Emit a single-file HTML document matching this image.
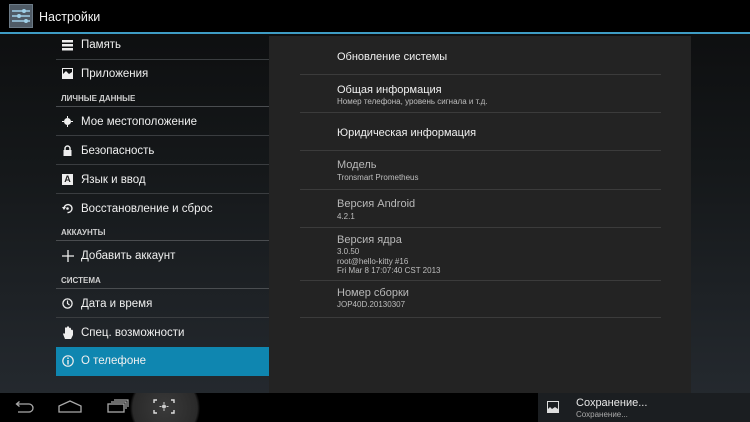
<!DOCTYPE html>
<html><head><meta charset="utf-8"><style>
*{margin:0;padding:0;box-sizing:border-box}
html,body{width:750px;height:422px;overflow:hidden}
body{position:relative;font-family:"Liberation Sans","DejaVu Sans",sans-serif;background:linear-gradient(#0c0d0e 0%,#15181a 40%,#262b31 100%);color:#eee}
.a{position:absolute}
.t{position:absolute;left:81px;font-size:11.5px;color:#f0f0f0;white-space:nowrap}
.h{position:absolute;left:61px;font-size:8px;font-weight:bold;color:#cfcfcf}
.ld{position:absolute;left:56px;width:213px;height:1px;background:#3a3d40}
.ic{position:absolute;left:62px;width:11px;height:11px}
.rt{position:absolute;left:337px;font-size:11px;color:#f0f0f0;white-space:nowrap}
.rg{color:#b8b8b8}
.rs{position:absolute;left:337px;font-size:8px;color:#bdbdbd;white-space:nowrap;line-height:12px}
.rd{position:absolute;left:300px;width:361px;height:1px;background:#3b3b3b}
</style></head><body>
<div class="a" style="left:0;top:0;width:750px;height:32px;background:#000"></div>
<div class="a" style="left:0;top:32px;width:750px;height:2px;background:#3e9cc4"></div>
<div class="a" style="left:9px;top:4px;width:24px;height:24px;background:#4f5b66;border:1px solid #6b7a86"></div>
<svg class="a" style="left:12px;top:8px" width="18" height="16"><g stroke="#9fd0e8" stroke-width="1.5"><line x1="0" y1="3" x2="18" y2="3"/><line x1="0" y1="8" x2="18" y2="8"/><line x1="0" y1="13" x2="18" y2="13"/></g><circle cx="12" cy="3" r="2" fill="#9fd0e8"/><circle cx="7" cy="8" r="2" fill="#9fd0e8"/><circle cx="14" cy="13" r="2" fill="#9fd0e8"/></svg>
<div class="a" style="left:39px;top:10px;font-size:12.5px;color:#f2f2f2">Настройки</div>

<div class="a" style="left:269px;top:36px;width:422px;height:357px;background:#232323"></div>

<svg class="ic" style="top:40px" viewBox="0 0 11 11"><g fill="#eee"><rect x="0" y="0" width="11" height="2.5"/><rect x="0" y="4" width="11" height="2.5"/><rect x="0" y="8" width="11" height="2.5"/></g></svg>
<div class="t" style="top:39px">Память</div>
<div class="ld" style="top:59px"></div>
<svg class="ic" style="top:68px" viewBox="0 0 11 11"><rect x="0.5" y="0.5" width="10" height="10" fill="none" stroke="#eee"/><path d="M1 10 L1 6 L4 3 L7 6 L10 4 L10 10Z" fill="#eee"/></svg>
<div class="t" style="top:68px">Приложения</div>
<div class="h" style="top:94px">ЛИЧНЫЕ ДАННЫЕ</div>
<div class="ld" style="top:106px;background:#4a4d50"></div>
<svg class="ic" style="top:116px" viewBox="0 0 11 11"><circle cx="5.5" cy="5.5" r="3.5" fill="#eee"/><path d="M5.5 0V2M5.5 9V11M0 5.5H2M9 5.5H11" stroke="#eee"/></svg>
<div class="t" style="top:116px">Мое местоположение</div>
<div class="ld" style="top:135px"></div>
<svg class="ic" style="top:145px" viewBox="0 0 11 11"><rect x="1.5" y="5" width="8" height="6" fill="#eee"/><path d="M3 5V3.5a2.5 2.5 0 0 1 5 0V5" stroke="#eee" stroke-width="1.5" fill="none"/></svg>
<div class="t" style="top:145px">Безопасность</div>
<div class="ld" style="top:164px"></div>
<div class="ic" style="top:174px;background:#eee;color:#222;font-size:9px;font-weight:bold;text-align:center;line-height:11px">A</div>
<div class="t" style="top:174px">Язык и ввод</div>
<div class="ld" style="top:193px"></div>
<svg class="ic" style="top:203px" viewBox="0 0 11 11"><path d="M2 5.5A4 4 0 1 1 5.5 9.5" stroke="#eee" stroke-width="1.4" fill="none"/><path d="M0 4L2 7L4 4Z" fill="#eee"/><circle cx="5.5" cy="5.5" r="1.3" fill="#eee"/></svg>
<div class="t" style="top:203px">Восстановление и сброс</div>
<div class="h" style="top:228px">АККАУНТЫ</div>
<div class="ld" style="top:240px;background:#4a4d50"></div>
<svg class="ic" style="top:250px;width:12px;height:12px" viewBox="0 0 12 12"><path d="M6 0V12M0 6H12" stroke="#eee" stroke-width="1.3"/></svg>
<div class="t" style="top:250px">Добавить аккаунт</div>
<div class="h" style="top:276px">СИСТЕМА</div>
<div class="ld" style="top:288px;background:#4a4d50"></div>
<svg class="ic" style="top:298px" viewBox="0 0 11 11"><circle cx="5.5" cy="5.5" r="4.6" stroke="#eee" stroke-width="1.3" fill="none"/><path d="M5.5 2.5V5.5L7.5 7" stroke="#eee" stroke-width="1.2" fill="none"/></svg>
<div class="t" style="top:298px">Дата и время</div>
<div class="ld" style="top:317px"></div>
<svg class="ic" style="top:326px;height:13px" viewBox="0 0 11 13"><path d="M3 13L1 8L2 7L3 8V2L4 1L5 2V1L6 0L7 1V2L8 1.5L9 2.5V4L10 3.5L11 4.5V9L9 13Z" fill="#eee"/></svg>
<div class="t" style="top:327px">Спец. возможности</div>
<div class="a" style="left:56px;top:347px;width:213px;height:29px;background:#0f86b0"></div>
<svg class="ic" style="top:355px;width:12px;height:12px" viewBox="0 0 12 12"><circle cx="6" cy="6" r="5.2" stroke="#eee" stroke-width="1.2" fill="none"/><path d="M6 5V9.5M6 2.5V4" stroke="#eee" stroke-width="1.4"/></svg>
<div class="t" style="top:355px">О телефоне</div>

<div class="rt" style="top:51px">Обновление системы</div>
<div class="rd" style="top:74px"></div>
<div class="rt" style="top:84px">Общая информация</div>
<div class="rs" style="top:96px">Номер телефона, уровень сигнала и т.д.</div>
<div class="rd" style="top:112px"></div>
<div class="rt" style="top:127px">Юридическая информация</div>
<div class="rd" style="top:150px"></div>
<div class="rt rg" style="top:159px">Модель</div>
<div class="rs" style="top:172px">Tronsmart Prometheus</div>
<div class="rd" style="top:189px"></div>
<div class="rt rg" style="top:198px">Версия Android</div>
<div class="rs" style="top:211px">4.2.1</div>
<div class="rd" style="top:227px"></div>
<div class="rt rg" style="top:234px">Версия ядра</div>
<div class="rs" style="top:247px;line-height:9.5px">3.0.50<br>root@hello-kitty #16<br>Fri Mar 8 17:07:40 CST 2013</div>
<div class="rd" style="top:280px"></div>
<div class="rt rg" style="top:287px">Номер сборки</div>
<div class="rs" style="top:299px">JOP40D.20130307</div>
<div class="rd" style="top:317px"></div>

<div class="a" style="left:0;top:393px;width:750px;height:29px;background:#000;overflow:hidden">
<div class="a" style="left:130px;top:-20px;width:70px;height:70px;border-radius:50%;background:radial-gradient(#3a3a3a,#2a2a2a 65%,rgba(0,0,0,0) 71%)"></div>
<svg class="a" style="left:12px;top:8px" width="24" height="14"><path d="M5 3H17A4 4 0 0 1 17 11H6" stroke="#aaa" stroke-width="1.3" fill="none"/><path d="M7.5 0.5L4.5 3L7.5 5.5" stroke="#aaa" stroke-width="1.3" fill="none"/></svg>
<svg class="a" style="left:58px;top:7px" width="24" height="13"><path d="M1 12V6L12 1L23 6V12Z" stroke="#aaa" stroke-width="1.3" fill="none"/></svg>
<svg class="a" style="left:107px;top:6px" width="22" height="14"><rect x="1" y="5" width="16" height="8" stroke="#aaa" stroke-width="1.3" fill="none"/><path d="M4 3H19V10M7 1H21V8" stroke="#aaa" stroke-width="1.2" fill="none"/></svg>
<svg class="a" style="left:153px;top:6px" width="22" height="15"><path d="M1 4V1H4M18 1H21V4M1 11V14H4M18 14H21V11" stroke="#ddd" stroke-width="1.4" fill="none"/><circle cx="11" cy="7.5" r="2" fill="#ccc"/><path d="M11 3V5M11 10V12M6.5 7.5H8.5M13.5 7.5H15.5" stroke="#ccc"/></svg>
<div class="a" style="left:538px;top:0;width:212px;height:29px;background:#1b1e21"></div>
<svg class="a" style="left:547px;top:8px" width="12" height="12"><rect x="0.5" y="0.5" width="11" height="11" fill="none" stroke="#ddd"/><path d="M1 11V8L3 6L5 8L8 6L11 8V11Z" fill="#ddd"/></svg>
<div class="a" style="left:576px;top:4px;font-size:11px;color:#e8e8e8">Сохранение...</div>
<div class="a" style="left:576px;top:17px;font-size:8px;color:#aaa">Сохранение...</div>
</div>
</body></html>
